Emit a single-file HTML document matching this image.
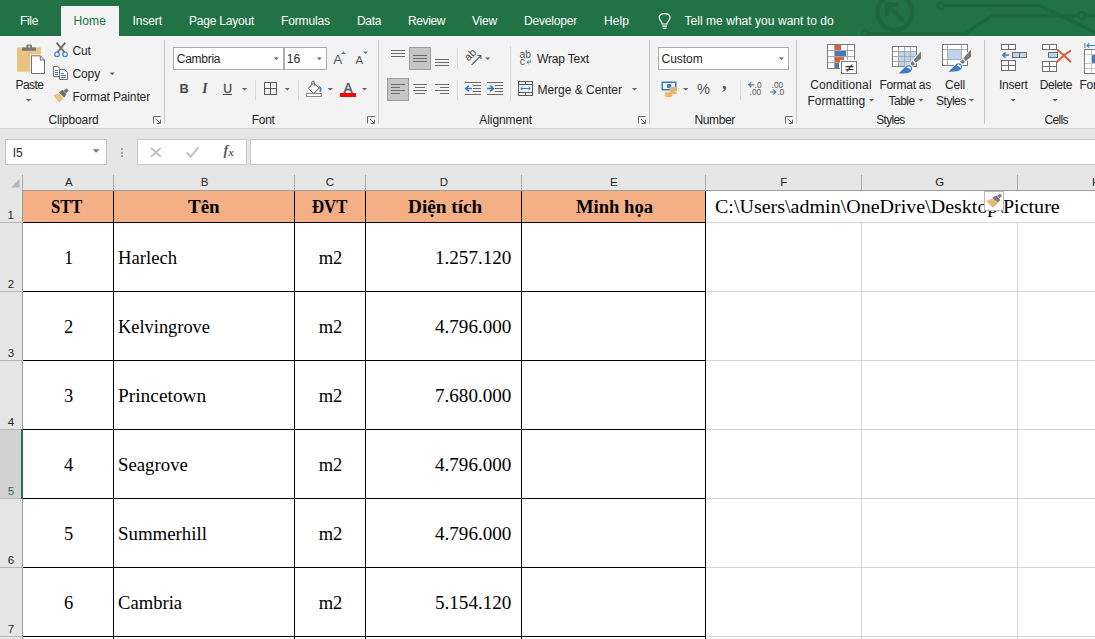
<!DOCTYPE html>
<html lang="en"><head><meta charset="utf-8"><title>Excel</title>
<style>
html,body{margin:0;padding:0;background:#fff;}
body{width:1095px;height:639px;overflow:hidden;}
#app{position:relative;width:1095px;height:639px;overflow:hidden;background:#fff;}
#gfx{position:absolute;left:0;top:0;width:1095px;height:639px;}
.t{position:absolute;white-space:nowrap;}
.c{shape-rendering:crispEdges;}
.s{font-family:"Liberation Sans",sans-serif;}
.r{font-family:"Liberation Serif",serif;}

</style></head>
<body>
<div id="app">
<svg id="gfx" width="1095" height="639" viewBox="0 0 1095 639">
<!-- ===== backgrounds ===== -->
<g class="c">
<rect x="0" y="0" width="1095" height="36" fill="#217346"/>
<rect x="0" y="36" width="1095" height="92" fill="#f3f3f3"/>
<rect x="0" y="128" width="1095" height="1" fill="#d6d6d6"/>
<rect x="0" y="129" width="1095" height="62" fill="#e6e6e6"/>
<rect x="0" y="191" width="23" height="448" fill="#e6e6e6"/>
</g>
<!-- ===== title pattern ===== -->
<clipPath id="tb"><rect x="0" y="0" width="1095" height="36"/></clipPath>
<g fill="none" stroke="#1d683e" stroke-width="3.4" clip-path="url(#tb)">
<circle cx="894.8" cy="12.3" r="17.4" stroke-width="4.4"/>
<path d="M903.6 21.2 L888.6 6.2" stroke-width="4.6"/>
<path d="M887.2 16 V4.600 H898.800" stroke-width="4.600" stroke-linejoin="miter"/>
<circle cx="940.6" cy="5.600" r="3.300" stroke-width="2.400"/>
<path d="M944.600 5.600 H1040 L1096 32.800"/>
<circle cx="865.200" cy="33.600" r="3.300" stroke-width="2.400"/>
<path d="M869 33.600 H965.400 L992 15.700 H1077.400"/>
<circle cx="1081.600" cy="15.700" r="3.600" stroke-width="2.400"/>
<path d="M1085.600 15.700 H1096"/>
</g>
<rect class="c" x="61" y="6" width="58" height="30" fill="#f3f3f3"/>
<!-- ===== ribbon group separators ===== -->
<g class="c" fill="#c9c9c9">
<rect x="164" y="40" width="1" height="84"/>
<rect x="378" y="40" width="1" height="84"/>
<rect x="649" y="40" width="1" height="84"/>
<rect x="796" y="40" width="1" height="84"/>
<rect x="984" y="40" width="1" height="84"/>
<rect x="510" y="46" width="1" height="55" fill="#d8d8d8"/>
<rect x="457" y="48" width="1" height="21" fill="#d8d8d8"/>
<rect x="457" y="80" width="1" height="20" fill="#d8d8d8"/>
<rect x="255" y="80" width="1" height="20" fill="#d8d8d8"/>
<rect x="298" y="80" width="1" height="20" fill="#d8d8d8"/>
<rect x="740" y="80" width="1" height="20" fill="#d8d8d8"/>
</g>
<!-- ===== combo boxes ===== -->
<g class="c" fill="#fff" stroke="#ababab" stroke-width="1">
<rect x="173.5" y="47.5" width="110" height="22"/>
<rect x="284.5" y="47.5" width="42" height="22"/>
<rect x="658.5" y="47.5" width="130" height="22"/>
</g>
<!-- selected toggle buttons -->
<g class="c" fill="#c6c6c6" stroke="#9d9d9d" stroke-width="1">
<rect x="409.5" y="47.5" width="21" height="22"/>
<rect x="387.5" y="78.5" width="21" height="22"/>
</g>
<!-- ===== formula bar ===== -->
<g class="c" fill="#fff" stroke="#c8c8c8" stroke-width="1">
<rect x="5.5" y="139.5" width="101" height="25"/>
<rect x="137.5" y="139.5" width="109" height="25"/>
<rect x="250.5" y="139.5" width="860" height="25"/>
</g>
<g class="c" fill="#a0a0a0">
<rect x="121" y="148" width="2" height="2"/><rect x="121" y="151.5" width="2" height="2"/><rect x="121" y="155" width="2" height="2"/>
</g>
<!-- ===== sheet ===== -->
<g class="c">
<!-- header fill -->
<rect x="23" y="191" width="683" height="31" fill="#f4b084"/>
<!-- selected row header -->
<rect x="0" y="430" width="21" height="68" fill="#d2d2d2"/>
<!-- light gridlines -->
<g fill="#d4d4d4">
<rect x="706" y="222" width="389" height="1"/>
<rect x="706" y="291" width="389" height="1"/>
<rect x="706" y="360" width="389" height="1"/>
<rect x="706" y="429" width="389" height="1"/>
<rect x="706" y="498" width="389" height="1"/>
<rect x="706" y="567" width="389" height="1"/>
<rect x="706" y="636" width="389" height="1"/>
<rect x="861" y="223" width="1" height="416"/>
<rect x="1017" y="223" width="1" height="416"/>
</g>
<!-- column header separators -->
<g fill="#ababab">
<rect x="22" y="175" width="1" height="15"/>
<rect x="113" y="175" width="1" height="15"/>
<rect x="294" y="175" width="1" height="15"/>
<rect x="365" y="175" width="1" height="15"/>
<rect x="521" y="175" width="1" height="15"/>
<rect x="705" y="175" width="1" height="15"/>
<rect x="861" y="175" width="1" height="15"/>
<rect x="1017" y="175" width="1" height="15"/>
</g>
<!-- row header separators -->
<g fill="#b5b5b5">
<rect x="0" y="222" width="22" height="1"/>
<rect x="0" y="291" width="22" height="1"/>
<rect x="0" y="360" width="22" height="1"/>
<rect x="0" y="429" width="22" height="1"/>
<rect x="0" y="498" width="22" height="1"/>
<rect x="0" y="567" width="22" height="1"/>
<rect x="0" y="636" width="22" height="1"/>
</g>
<!-- header edges -->
<rect x="22" y="190" width="1073" height="1" fill="#9e9e9e"/>
<rect x="22" y="190" width="1" height="449" fill="#9e9e9e"/>
<!-- black borders -->
<g fill="#000">
<rect x="23" y="222" width="683" height="1"/>
<rect x="23" y="291" width="683" height="1"/>
<rect x="23" y="360" width="683" height="1"/>
<rect x="23" y="429" width="683" height="1"/>
<rect x="23" y="498" width="683" height="1"/>
<rect x="23" y="567" width="683" height="1"/>
<rect x="23" y="636" width="683" height="1"/>
<rect x="113" y="191" width="1" height="448"/>
<rect x="294" y="191" width="1" height="448"/>
<rect x="365" y="191" width="1" height="448"/>
<rect x="521" y="191" width="1" height="448"/>
<rect x="705" y="191" width="1" height="448"/>
</g>
<!-- selected row green marker -->
<rect x="21" y="429" width="2" height="70" fill="#217346"/>
</g>
<!-- select-all triangle -->
<path d="M19.5 179 V187.5 H11 Z" fill="#b7b7b7"/>
<!-- dropdown arrows -->
<g fill="#5f5f5f">
<path d="M26 99 h5 l-2.5 2.6z"/>
<path d="M109.8 72.6 h5 l-2.5 2.6z"/>
<path d="M273.8 57.4 h5 l-2.5 2.6z"/>
<path d="M316.9 57.4 h5 l-2.5 2.6z"/>
<path d="M242 87.9 h5 l-2.5 2.6z"/>
<path d="M284.9 87.9 h5 l-2.5 2.6z"/>
<path d="M327.8 87.9 h5 l-2.5 2.6z"/>
<path d="M362 87.9 h5 l-2.5 2.6z"/>
<path d="M485.2 57.4 h5 l-2.5 2.6z"/>
<path d="M632 87.9 h5 l-2.5 2.6z"/>
<path d="M778.9 57.4 h5 l-2.5 2.6z"/>
<path d="M683.2 87.9 h5 l-2.5 2.6z"/>
<path d="M869 99 h5 l-2.5 2.6z"/>
<path d="M918.4 99 h5 l-2.5 2.6z"/>
<path d="M969 99 h5 l-2.5 2.6z"/>
<path d="M1010.6 99 h5 l-2.5 2.6z"/>
<path d="M1052.5 99 h5 l-2.5 2.6z"/>
<path d="M92.6 149.2 h7 l-3.5 3.6z" fill="#777"/>
</g>
<!-- dialog launchers -->
<g fill="none" stroke="#6a6a6a" stroke-width="1">
<path d="M153.5 123.5 V116.5 H160.5 M156.0 119 L160.0 123 M160.5 119.8 V123.5 H156.8"/>
<path d="M367.5 123.5 V116.5 H374.5 M370.0 119 L374.0 123 M374.5 119.8 V123.5 H370.8"/>
<path d="M638.5 123.5 V116.5 H645.5 M641.0 119 L645.0 123 M645.5 119.8 V123.5 H641.8"/>
<path d="M785.5 123.5 V116.5 H792.5 M788.0 119 L792.0 123 M792.5 119.8 V123.5 H788.8"/>
</g>
<!-- Paste -->
<rect x="17" y="47.3" width="24" height="24.4" rx="1.3" fill="#eac282"/>
<path d="M22 50.8 V48.6 q0-1 1-1 H26.4 V45.6 q0-1.2 1.2-1.2 h3.2 q1.2 0 1.2 1.2 V47.6 H35 q1 0 1 1 V50.8z" fill="#777"/>
<rect x="28.2" y="45.6" width="2" height="2" fill="#ddd"/>
<rect x="30" y="54.3" width="16" height="20.6" fill="#f3f3f3"/>
<path d="M31.5 55.8 H40.3 L44.5 60 V73.5 H31.5z" fill="#fff" stroke="#6e6e6e" stroke-width="1"/>
<path d="M40.3 55.8 V60 H44.5" fill="none" stroke="#6e6e6e" stroke-width="1"/>
<!-- Cut -->
<g fill="none">
<path d="M56.6 42.6 L64.4 52.2 M65.3 42.6 L57.6 52.2" stroke="#666" stroke-width="1.8"/>
<circle cx="57.1" cy="54.3" r="2.3" stroke="#3b7dc1" stroke-width="1.2"/>
<circle cx="65" cy="54.3" r="2.3" stroke="#3b7dc1" stroke-width="1.2"/>
</g>
<!-- Copy -->
<g stroke="#6e6e6e" stroke-width="1" fill="#fff">
<path d="M53.5 66.5 H57.8 L60.5 69.2 V76.5 H53.5z"/>
<path d="M59.5 69.5 H64.6 L67.5 72.4 V79.5 H59.5z"/>
</g>
<g stroke="#3b7dc1" stroke-width="1" class="c">
<path d="M55 70.5 h3 M55 72.5 h3 M55 74.5 h3 M61 73.5 h3 M61 75.5 h5 M61 77.5 h5"/>
</g>
<!-- Format painter -->
<path d="M53.3 95.6 L58.6 93.2 L63.7 97.8 L59.4 102.6z" fill="#eac282"/>
<path d="M58.8 92.6 L62.6 89.8 L66.4 94.2 L64.2 97.4z" fill="#6e6e6e"/>
<path d="M63.6 90.6 L66.8 88.4 L68.8 90.8 L66 93.2z" fill="#6e6e6e"/>
<!-- grow / shrink font -->
<text x="333.2" y="63.6" font-family="Liberation Sans, sans-serif" font-size="13.5" fill="#555">A</text>
<path d="M341 54 h5 l-2.5 -2.6z" fill="#3b7dc1"/>
<text x="355.6" y="63.6" font-family="Liberation Sans, sans-serif" font-size="11.5" fill="#555">A</text>
<path d="M363 51.6 h5 l-2.5 2.6z" fill="#3b7dc1"/>
<!-- B I U -->
<text x="179.4" y="92.9" font-family="Liberation Sans, sans-serif" font-size="12.8" font-weight="bold" fill="#4a4a4a">B</text>
<text x="202.3" y="92.9" font-family="Liberation Serif, serif" font-size="13.6" font-style="italic" font-weight="bold" fill="#4a4a4a">I</text>
<text x="223.2" y="92.6" font-family="Liberation Sans, sans-serif" font-size="12.2" fill="#4a4a4a" stroke="#4a4a4a" stroke-width="0.3">U</text>
<rect class="c" x="223" y="94" width="9" height="1" fill="#4a4a4a"/>
<!-- borders -->
<g class="c" fill="none" stroke="#5a5a5a" stroke-width="1">
<rect x="264.5" y="82.5" width="12" height="12"/>
<path d="M270.5 82.5 v12 M264.5 88.5 h12"/>
</g>
<!-- fill color -->
<rect class="c" x="306.5" y="93.5" width="15" height="3" fill="#fff" stroke="#8a8a8a"/>
<path d="M308.2 88.4 L313.6 83 L319.2 88.3 L313.6 93.4z" fill="#fff" stroke="#555" stroke-width="1"/>
<path d="M311.8 84.6 V82.4 q0-1.3 1.3-1.3 q1.3 0 1.3 1.300 V86.200" fill="none" stroke="#555" stroke-width="0.9"/>
<path d="M318.200 85.200 Q322.400 87 321.400 90.400 Q320.800 92 319.400 92 Q320.600 88.800 318.200 85.200z" fill="#3b7dc1"/>
<!-- font color -->
<text x="343.4" y="92.9" font-family="Liberation Sans, sans-serif" font-size="13.8" fill="#555" stroke="#555" stroke-width="0.35">A</text>
<rect class="c" x="340" y="93" width="16" height="4" fill="#f00"/>
<!-- vertical align icons -->
<g class="c" fill="#6a6a6a">
<rect x="391" y="50" width="14" height="1"/><rect x="391" y="53" width="14" height="1"/><rect x="391" y="56" width="14" height="1"/>
<rect x="413" y="55" width="14" height="1"/><rect x="413" y="58" width="14" height="1"/><rect x="413" y="61" width="14" height="1"/>
<rect x="435" y="59" width="14" height="1"/><rect x="435" y="62" width="14" height="1"/><rect x="435" y="65" width="14" height="1"/>
<!-- horizontal align -->
<rect x="391" y="84" width="14" height="1"/><rect x="391" y="87" width="9" height="1"/><rect x="391" y="90" width="14" height="1"/><rect x="391" y="93" width="9" height="1"/>
<rect x="413" y="84" width="14" height="1"/><rect x="415" y="87" width="10" height="1"/><rect x="413" y="90" width="14" height="1"/><rect x="415" y="93" width="10" height="1"/>
<rect x="435" y="84" width="14" height="1"/><rect x="440" y="87" width="9" height="1"/><rect x="435" y="90" width="14" height="1"/><rect x="440" y="93" width="9" height="1"/>
<!-- indents -->
<rect x="465" y="82" width="16" height="1"/><rect x="473" y="85" width="8" height="1"/><rect x="473" y="88" width="8" height="1"/><rect x="473" y="91" width="8" height="1"/><rect x="465" y="94" width="16" height="1"/>
<rect x="487" y="82" width="16" height="1"/><rect x="495" y="85" width="8" height="1"/><rect x="495" y="88" width="8" height="1"/><rect x="495" y="91" width="8" height="1"/><rect x="487" y="94" width="16" height="1"/>
</g>
<g fill="none" stroke="#3b7dc1" stroke-width="1.700">
<path d="M472 88.500 H466 M468.800 85.600 L465.800 88.500 L468.800 91.400"/>
<path d="M487 88.500 H493 M490.200 85.600 L493.200 88.500 L490.200 91.400"/>
</g>
<!-- orientation -->
<g transform="translate(468.6 61.4) rotate(-45)">
<text x="0" y="0" font-family="Liberation Sans, sans-serif" font-size="10.600" fill="#444">ab</text>
</g>
<path d="M471.600 64.800 L480.600 55.800 M477.400 55.500 H480.900 V59" fill="none" stroke="#555" stroke-width="1.100"/>
<!-- wrap text -->
<text x="519.6" y="57.600" font-family="Liberation Sans, sans-serif" font-size="10.400" fill="#555">ab</text>
<text x="519.8" y="64.700" font-family="Liberation Sans, sans-serif" font-size="10.400" fill="#555">c</text>
<path d="M530.200 60.200 V62.300 H527.200 M528.700 60.700 L527 62.300 L528.700 63.900" fill="none" stroke="#3b7dc1" stroke-width="1"/>
<!-- merge -->
<g class="c" fill="none" stroke="#5a5a5a" stroke-width="1">
<rect x="518.5" y="81.5" width="14" height="14"/>
<path d="M518.5 84.5 h14 M518.5 92.5 h14 M525.5 81.5 v3 M525.5 92.5 v3"/>
</g>
<path d="M520.8 88.5 H530.2 M522.6 86.8 L520.8 88.5 L522.6 90.2 M528.4 86.8 L530.2 88.5 L528.4 90.2" fill="none" stroke="#3b7dc1" stroke-width="1"/>
<!-- currency -->
<rect x="661.5" y="81.5" width="15" height="9" fill="#3b7dc1"/>
<rect x="663" y="83" width="12" height="6" fill="#f3f3f3"/>
<circle cx="669" cy="86" r="2.3" fill="#3b7dc1"/>
<g fill="#e8b56a">
<ellipse cx="673" cy="88.4" rx="4" ry="1.4"/><ellipse cx="673" cy="90.6" rx="4" ry="1.4"/><ellipse cx="673" cy="92.8" rx="4" ry="1.4"/>
<ellipse cx="668.6" cy="93.6" rx="4" ry="1.4"/><ellipse cx="668.6" cy="95.8" rx="4" ry="1.4"/>
</g>
<!-- percent, comma -->
<text x="697" y="94.3" font-family="Liberation Sans, sans-serif" font-size="14.2" fill="#555" textLength="13" lengthAdjust="spacingAndGlyphs">%</text>
<text x="722" y="89.200" font-family="Liberation Serif, serif" font-size="19" font-weight="bold" fill="#555">,</text>
<!-- decimals -->
<g font-family="Liberation Sans, sans-serif" font-size="8.400" fill="#555">
<text x="754.600" y="87.600">.0</text><text x="749.600" y="94.800">.00</text>
<text x="771.600" y="87.600">.00</text><text x="777.200" y="94.800">.0</text>
</g>
<g fill="none" stroke="#3b7dc1" stroke-width="1.2">
<path d="M754.400 84.800 H748.800 M751.200 82.400 L748.700 84.800 L751.200 87.200"/>
<path d="M770.200 92 H775.800 M773.400 89.600 L775.900 92 L773.400 94.400"/>
</g>
<!-- Conditional formatting -->
<g class="c">
<rect x="827.5" y="44.5" width="27" height="24" fill="#fff" stroke="#7a7a7a"/>
<path d="M834.5 45 v23 M847.5 45 v23 M828 50.5 h26 M828 56.5 h26 M828 62.5 h26" stroke="#a8a8a8" fill="none"/>
<rect x="835" y="45" width="6" height="5" fill="#d9603b"/>
<rect x="835" y="51" width="11" height="5" fill="#3f7dc0"/>
<rect x="835" y="57" width="9" height="5" fill="#d9603b"/>
<rect x="835" y="63" width="4" height="5" fill="#3f7dc0"/>
<rect x="840" y="60" width="18" height="15" fill="#f3f3f3"/>
<rect x="841.5" y="61.5" width="15" height="12" fill="#fff" stroke="#7a7a7a"/>
</g>
<text x="844.2" y="72.400" font-family="DejaVu Sans, sans-serif" font-size="12.500" fill="#333">≠</text>
<!-- Format as table -->
<g class="c">
<rect x="892.5" y="46.5" width="24" height="20" fill="#fff" stroke="#7a7a7a"/>
<rect x="899" y="52" width="17" height="14" fill="#bdd4ee"/>
<path d="M898.5 47 v19 M904.5 47 v19 M910.5 47 v19 M893 51.500 h23 M893 56.500 h23 M893 61.500 h23" stroke="#a8a8a8" fill="none"/>
</g>
<path d="M921.0 51.4 L921.0 58.6 L915.8 62.7 L913.4 60.1z" fill="#7a7a7a" stroke="#f3f3f3" stroke-width="2" paint-order="stroke"/>
<path d="M912.5 61.0 L915.0 63.9 L912.8 65.9 L910.2 63.2z" fill="#7a7a7a" stroke="#f3f3f3" stroke-width="1.6" paint-order="stroke"/>
<path d="M898.6 73.6 L904.6 67.6 Q907.4 63.8 910.4 65.6 Q913.6 68.2 910.8 71.4 Q908.2 73.8 898.6 73.6z" fill="#3f7dc0" stroke="#f3f3f3" stroke-width="1.6" paint-order="stroke"/>
<path d="M906.6 67.4 q1.8-2 3.6-0.6 q1.4 1.600 0.400 3.200 q-0.600-2-4-2.600z" fill="#f4f8fd"/>
<!-- Cell styles -->
<g class="c">
<rect x="942.5" y="44.500" width="25" height="21" fill="#fff" stroke="#7a7a7a"/>
<rect x="948" y="50" width="13" height="9" fill="#bdd4ee"/>
<path d="M947.500 45 v20 M961.500 45 v20 M943 49.500 h24 M943 59.500 h24" stroke="#a8a8a8" fill="none"/>
</g>
<path d="M971.0 49.6 L971.0 56.8 L965.8 60.9 L963.4 58.3z" fill="#7a7a7a" stroke="#f3f3f3" stroke-width="2" paint-order="stroke"/>
<path d="M962.5 59.2 L965.0 62.1 L962.8 64.1 L960.2 61.4z" fill="#7a7a7a" stroke="#f3f3f3" stroke-width="1.6" paint-order="stroke"/>
<path d="M948.6 71.8 L954.6 65.8 Q957.4 62.0 960.4 63.8 Q963.6 66.4 960.8 69.6 Q958.2 72.0 948.6 71.8z" fill="#3f7dc0" stroke="#f3f3f3" stroke-width="1.6" paint-order="stroke"/>
<path d="M956.6 65.6 q1.8-2 3.6-0.6 q1.4 1.600 0.400 3.200 q-0.600-2-4-2.600z" fill="#f4f8fd"/>
<!-- Insert cells -->
<g class="c" fill="#fff" stroke="#6e6e6e" stroke-width="1">
<rect x="1001.5" y="44.5" width="14" height="5"/>
<path d="M1008.5 44.500 v5" fill="none"/>
<rect x="1012.5" y="52.5" width="14" height="5" fill="#bdd4ee"/>
<path d="M1019.5 52.5 v5" fill="none"/>
<rect x="1001.5" y="60.5" width="14" height="10"/>
<path d="M1008.5 60.500 v10 M1001.500 65.500 h14" fill="none"/>
</g>
<path d="M1009 55 H1003 M1005.6 52.400 L1002.800 55 L1005.600 57.600" fill="none" stroke="#3f7dc0" stroke-width="1.600"/>
<!-- Delete cells -->
<g class="c" fill="#fff" stroke="#6e6e6e" stroke-width="1">
<rect x="1042.5" y="44.5" width="14" height="5"/>
<path d="M1049.5 44.500 v5" fill="none"/>
<rect x="1048.5" y="52.5" width="9" height="5" fill="#bdd4ee"/>
<rect x="1042.5" y="61.5" width="14" height="10"/>
<path d="M1049.5 61.500 v10 M1042.500 66.500 h14" fill="none"/>
</g>
<path d="M1057 49.600 Q1063 54 1071 62.400 M1071 50.400 Q1063 55 1056.800 62.200" fill="none" stroke="#d9603b" stroke-width="2"/>
<!-- Format cells (clipped) -->
<path d="M1084.900 43 v5 M1095 45.500 H1087 M1089.300 43.200 L1087 45.500 L1089.300 47.800" fill="none" stroke="#3f7dc0" stroke-width="1.100"/>
<g class="c">
<rect x="1084.500" y="49.500" width="14" height="24" fill="#fff" stroke="#7a7a7a"/>
<path d="M1091.500 50 v23 M1085 54.500 h12 M1085 63.500 h12 M1085 68.500 h12" stroke="#c6c6c6" fill="none"/>
<rect x="1092" y="55" width="4" height="8" fill="#3f7dc0"/>
</g>
<!-- formula bar icons -->
<path d="M151 147.800 L160.800 156.800 M160.800 147.800 L151 156.800" fill="none" stroke="#bcbcbc" stroke-width="1.600"/>
<path d="M186.600 152.600 L190.800 156.600 L198.400 147.400" fill="none" stroke="#c4c4c4" stroke-width="2.200"/>
<text x="223.600" y="155" font-family="Liberation Serif, serif" font-size="14" font-style="italic" font-weight="bold" fill="#5a5a5a">f</text>
<text x="228.400" y="156.200" font-family="Liberation Serif, serif" font-size="10.500" font-style="italic" font-weight="bold" fill="#5a5a5a">x</text>
<!-- bulb -->
<g fill="none" stroke="#fff" stroke-width="1.200">
<path d="M662.200 24 C662.200 21.600 659.200 20.600 659.200 17.600 C659.200 14.600 661.800 13.600 664.600 13.600 C667.400 13.600 670 14.600 670 17.600 C670 20.600 667 21.600 667 24 Z"/>
<path d="M662.200 26.200 h4.800 M662.800 28.400 h3.600"/>
</g>

</svg>

<span class="t s" id="t0" style="left:20.00px;top:12.84px;font-size:12px;line-height:16px;color:#ffffff;letter-spacing:-0.336px;">File</span>
<span class="t s" id="t1" style="left:73.40px;top:12.84px;font-size:12px;line-height:16px;color:#217346;letter-spacing:0.146px;">Home</span>
<span class="t s" id="t2" style="left:132.60px;top:12.84px;font-size:12px;line-height:16px;color:#ffffff;letter-spacing:-0.103px;">Insert</span>
<span class="t s" id="t3" style="left:189.00px;top:12.84px;font-size:12px;line-height:16px;color:#ffffff;letter-spacing:-0.217px;">Page Layout</span>
<span class="t s" id="t4" style="left:281.00px;top:12.84px;font-size:12px;line-height:16px;color:#ffffff;letter-spacing:-0.127px;">Formulas</span>
<span class="t s" id="t5" style="left:357.00px;top:12.84px;font-size:12px;line-height:16px;color:#ffffff;letter-spacing:-0.340px;">Data</span>
<span class="t s" id="t6" style="left:408.00px;top:12.84px;font-size:12px;line-height:16px;color:#ffffff;letter-spacing:-0.393px;">Review</span>
<span class="t s" id="t7" style="left:472.00px;top:12.84px;font-size:12px;line-height:16px;color:#ffffff;letter-spacing:-0.199px;">View</span>
<span class="t s" id="t8" style="left:524.00px;top:12.84px;font-size:12px;line-height:16px;color:#ffffff;letter-spacing:-0.189px;">Developer</span>
<span class="t s" id="t9" style="left:604.00px;top:12.84px;font-size:12px;line-height:16px;color:#ffffff;letter-spacing:0.078px;">Help</span>
<span class="t s" id="t10" style="left:684.50px;top:12.84px;font-size:12px;line-height:16px;color:#ffffff;letter-spacing:0.042px;">Tell me what you want to do</span>
<span class="t s" id="t11" style="left:15.50px;top:76.94px;font-size:12px;line-height:16px;color:#262626;letter-spacing:-0.578px;">Paste</span>
<span class="t s" id="t12" style="left:72.50px;top:42.64px;font-size:12px;line-height:16px;color:#262626;letter-spacing:-0.129px;">Cut</span>
<span class="t s" id="t13" style="left:72.50px;top:65.84px;font-size:12px;line-height:16px;color:#262626;letter-spacing:-0.129px;">Copy</span>
<span class="t s" id="t14" style="left:72.50px;top:88.64px;font-size:12px;line-height:16px;color:#262626;letter-spacing:-0.133px;">Format Painter</span>
<span class="t s" id="t15" style="left:48.40px;top:111.54px;font-size:12px;line-height:16px;color:#262626;letter-spacing:-0.131px;">Clipboard</span>
<span class="t s" id="t16" style="left:176.80px;top:50.64px;font-size:12px;line-height:16px;color:#262626;letter-spacing:-0.266px;">Cambria</span>
<span class="t s" id="t17" style="left:286.87px;top:50.64px;font-size:12px;line-height:16px;color:#262626;">16</span>
<span class="t s" id="t18" style="left:251.70px;top:111.54px;font-size:12px;line-height:16px;color:#262626;letter-spacing:-0.254px;">Font</span>
<span class="t s" id="t19" style="left:537.00px;top:50.64px;font-size:12px;line-height:16px;color:#262626;letter-spacing:-0.175px;">Wrap Text</span>
<span class="t s" id="t20" style="left:537.40px;top:82.04px;font-size:12px;line-height:16px;color:#262626;letter-spacing:-0.007px;">Merge &amp; Center</span>
<span class="t s" id="t21" style="left:479.30px;top:111.54px;font-size:12px;line-height:16px;color:#262626;letter-spacing:-0.075px;">Alignment</span>
<span class="t s" id="t22" style="left:661.50px;top:50.64px;font-size:12px;line-height:16px;color:#262626;letter-spacing:-0.041px;">Custom</span>
<span class="t s" id="t23" style="left:694.40px;top:111.54px;font-size:12px;line-height:16px;color:#262626;letter-spacing:-0.348px;">Number</span>
<span class="t s" id="t24" style="left:810.20px;top:76.84px;font-size:12px;line-height:16px;color:#262626;letter-spacing:0.132px;">Conditional</span>
<span class="t s" id="t25" style="left:807.40px;top:93.04px;font-size:12px;line-height:16px;color:#262626;letter-spacing:0.054px;">Formatting</span>
<span class="t s" id="t26" style="left:879.40px;top:76.84px;font-size:12px;line-height:16px;color:#262626;letter-spacing:-0.268px;">Format as</span>
<span class="t s" id="t27" style="left:888.50px;top:93.04px;font-size:12px;line-height:16px;color:#262626;letter-spacing:-0.517px;">Table</span>
<span class="t s" id="t28" style="left:945.00px;top:76.84px;font-size:12px;line-height:16px;color:#262626;letter-spacing:-0.193px;">Cell</span>
<span class="t s" id="t29" style="left:936.00px;top:93.04px;font-size:12px;line-height:16px;color:#262626;letter-spacing:-0.481px;">Styles</span>
<span class="t s" id="t30" style="left:876.30px;top:111.54px;font-size:12px;line-height:16px;color:#262626;letter-spacing:-0.731px;">Styles</span>
<span class="t s" id="t31" style="left:999.00px;top:76.94px;font-size:12px;line-height:16px;color:#262626;letter-spacing:-0.253px;">Insert</span>
<span class="t s" id="t32" style="left:1039.70px;top:76.94px;font-size:12px;line-height:16px;color:#262626;letter-spacing:-0.398px;">Delete</span>
<span class="t s" id="t33" style="left:1079.50px;top:76.94px;font-size:12px;line-height:16px;color:#262626;letter-spacing:-0.253px;">Format</span>
<span class="t s" id="t34" style="left:1044.60px;top:111.54px;font-size:12px;line-height:16px;color:#262626;letter-spacing:-0.694px;">Cells</span>
<span class="t s" id="t35" style="left:12.64px;top:144.84px;font-size:12px;line-height:16px;color:#262626;">I5</span>
<span class="t s" id="t36" style="left:64.91px;top:175.32px;font-size:11.5px;line-height:15px;color:#262626;">A</span>
<span class="t s" id="t37" style="left:200.81px;top:175.32px;font-size:11.5px;line-height:15px;color:#262626;">B</span>
<span class="t s" id="t38" style="left:325.84px;top:175.32px;font-size:11.5px;line-height:15px;color:#262626;">C</span>
<span class="t s" id="t39" style="left:439.64px;top:175.32px;font-size:11.5px;line-height:15px;color:#262626;">D</span>
<span class="t s" id="t40" style="left:610.06px;top:175.32px;font-size:11.5px;line-height:15px;color:#262626;">E</span>
<span class="t s" id="t41" style="left:780.28px;top:175.32px;font-size:11.5px;line-height:15px;color:#262626;">F</span>
<span class="t s" id="t42" style="left:935.27px;top:175.32px;font-size:11.5px;line-height:15px;color:#262626;">G</span>
<span class="t s" id="t43" style="left:1092.09px;top:175.32px;font-size:11.5px;line-height:15px;color:#262626;">H</span>
<span class="t s" id="t44" style="left:7.60px;top:207.62px;font-size:11.5px;line-height:15px;color:#262626;">1</span>
<span class="t s" id="t45" style="left:7.75px;top:276.62px;font-size:11.5px;line-height:15px;color:#262626;">2</span>
<span class="t s" id="t46" style="left:7.75px;top:345.62px;font-size:11.5px;line-height:15px;color:#262626;">3</span>
<span class="t s" id="t47" style="left:7.75px;top:414.62px;font-size:11.5px;line-height:15px;color:#262626;">4</span>
<span class="t s" id="t48" style="left:7.75px;top:483.62px;font-size:11.5px;line-height:15px;color:#217346;">5</span>
<span class="t s" id="t49" style="left:7.75px;top:552.62px;font-size:11.5px;line-height:15px;color:#262626;">6</span>
<span class="t s" id="t50" style="left:7.75px;top:621.62px;font-size:11.5px;line-height:15px;color:#262626;">7</span>
<span class="t r" id="t51" style="left:51.40px;top:195.36px;font-size:18.5px;line-height:24px;color:#000;font-weight:bold;transform:scaleX(0.8979);transform-origin:0 0;">STT</span>
<span class="t r" id="t52" style="left:188.00px;top:195.36px;font-size:18.5px;line-height:24px;color:#000;font-weight:bold;transform:scaleX(1.0278);transform-origin:0 0;">Tên</span>
<span class="t r" id="t53" style="left:311.60px;top:195.36px;font-size:18.5px;line-height:24px;color:#000;font-weight:bold;transform:scaleX(0.9062);transform-origin:0 0;">ĐVT</span>
<span class="t r" id="t54" style="left:408.00px;top:195.36px;font-size:18.5px;line-height:24px;color:#000;font-weight:bold;transform:scaleX(1.0401);transform-origin:0 0;">Diện tích</span>
<span class="t r" id="t55" style="left:576.30px;top:195.36px;font-size:18.5px;line-height:24px;color:#000;font-weight:bold;transform:scaleX(1.0053);transform-origin:0 0;">Minh họa</span>
<span class="t r" id="t56" style="left:715.00px;top:195.36px;font-size:18.5px;line-height:24px;color:#000;transform:scaleX(1.0820);transform-origin:0 0;">C:\Users\admin\OneDrive\Desktop\Picture</span>
<span class="t r" id="t57" style="left:63.88px;top:245.76px;font-size:18.5px;line-height:24px;color:#000;">1</span>
<span class="t r" id="t58" style="left:117.70px;top:245.76px;font-size:18.5px;line-height:24px;color:#000;transform:scaleX(1.0094);transform-origin:0 0;">Harlech</span>
<span class="t r" id="t59" style="left:318.68px;top:245.76px;font-size:18.5px;line-height:24px;color:#000;">m2</span>
<span class="t r" id="t60" style="left:435.00px;top:245.76px;font-size:18.5px;line-height:24px;color:#000;transform:scaleX(1.0324);transform-origin:0 0;">1.257.120</span>
<span class="t r" id="t61" style="left:63.88px;top:314.76px;font-size:18.5px;line-height:24px;color:#000;">2</span>
<span class="t r" id="t62" style="left:117.50px;top:314.76px;font-size:18.5px;line-height:24px;color:#000;transform:scaleX(0.9948);transform-origin:0 0;">Kelvingrove</span>
<span class="t r" id="t63" style="left:318.68px;top:314.76px;font-size:18.5px;line-height:24px;color:#000;">m2</span>
<span class="t r" id="t64" style="left:435.00px;top:314.76px;font-size:18.5px;line-height:24px;color:#000;transform:scaleX(1.0324);transform-origin:0 0;">4.796.000</span>
<span class="t r" id="t65" style="left:63.88px;top:383.76px;font-size:18.5px;line-height:24px;color:#000;">3</span>
<span class="t r" id="t66" style="left:117.50px;top:383.76px;font-size:18.5px;line-height:24px;color:#000;transform:scaleX(1.0479);transform-origin:0 0;">Princetown</span>
<span class="t r" id="t67" style="left:318.68px;top:383.76px;font-size:18.5px;line-height:24px;color:#000;">m2</span>
<span class="t r" id="t68" style="left:435.00px;top:383.76px;font-size:18.5px;line-height:24px;color:#000;transform:scaleX(1.0324);transform-origin:0 0;">7.680.000</span>
<span class="t r" id="t69" style="left:63.88px;top:452.76px;font-size:18.5px;line-height:24px;color:#000;">4</span>
<span class="t r" id="t70" style="left:117.70px;top:452.76px;font-size:18.5px;line-height:24px;color:#000;transform:scaleX(1.0153);transform-origin:0 0;">Seagrove</span>
<span class="t r" id="t71" style="left:318.68px;top:452.76px;font-size:18.5px;line-height:24px;color:#000;">m2</span>
<span class="t r" id="t72" style="left:435.00px;top:452.76px;font-size:18.5px;line-height:24px;color:#000;transform:scaleX(1.0324);transform-origin:0 0;">4.796.000</span>
<span class="t r" id="t73" style="left:63.88px;top:521.76px;font-size:18.5px;line-height:24px;color:#000;">5</span>
<span class="t r" id="t74" style="left:117.70px;top:521.76px;font-size:18.5px;line-height:24px;color:#000;transform:scaleX(1.0186);transform-origin:0 0;">Summerhill</span>
<span class="t r" id="t75" style="left:318.68px;top:521.76px;font-size:18.5px;line-height:24px;color:#000;">m2</span>
<span class="t r" id="t76" style="left:435.00px;top:521.76px;font-size:18.5px;line-height:24px;color:#000;transform:scaleX(1.0324);transform-origin:0 0;">4.796.000</span>
<span class="t r" id="t77" style="left:63.88px;top:590.76px;font-size:18.5px;line-height:24px;color:#000;">6</span>
<span class="t r" id="t78" style="left:117.70px;top:590.76px;font-size:18.5px;line-height:24px;color:#000;transform:scaleX(1.0062);transform-origin:0 0;">Cambria</span>
<span class="t r" id="t79" style="left:318.68px;top:590.76px;font-size:18.5px;line-height:24px;color:#000;">m2</span>
<span class="t r" id="t80" style="left:435.00px;top:590.76px;font-size:18.5px;line-height:24px;color:#000;transform:scaleX(1.0324);transform-origin:0 0;">5.154.120</span>
<svg id="ov" width="24" height="24" viewBox="982 189 24 24" style="position:absolute;left:982px;top:189px;width:24px;height:24px;">
<rect x="984.5" y="191.500" width="19" height="19" fill="#fcfcfc" stroke="#b8b8b8" stroke-width="1" shape-rendering="crispEdges"/>
<path d="M986.200 200.800 L993.200 198.600 L997.800 203.600 L992.900 207.800z" fill="#e6b873"/>
<path d="M992.200 197.800 L996.400 195.300 L1000.200 200 L997.800 202.800z" fill="#7a7a7a"/>
<path d="M997.300 195.800 L1000.300 193.800 L1002 196 L999.300 198.200z" fill="#7a7a7a"/>
</svg>
</div>
</body></html>
